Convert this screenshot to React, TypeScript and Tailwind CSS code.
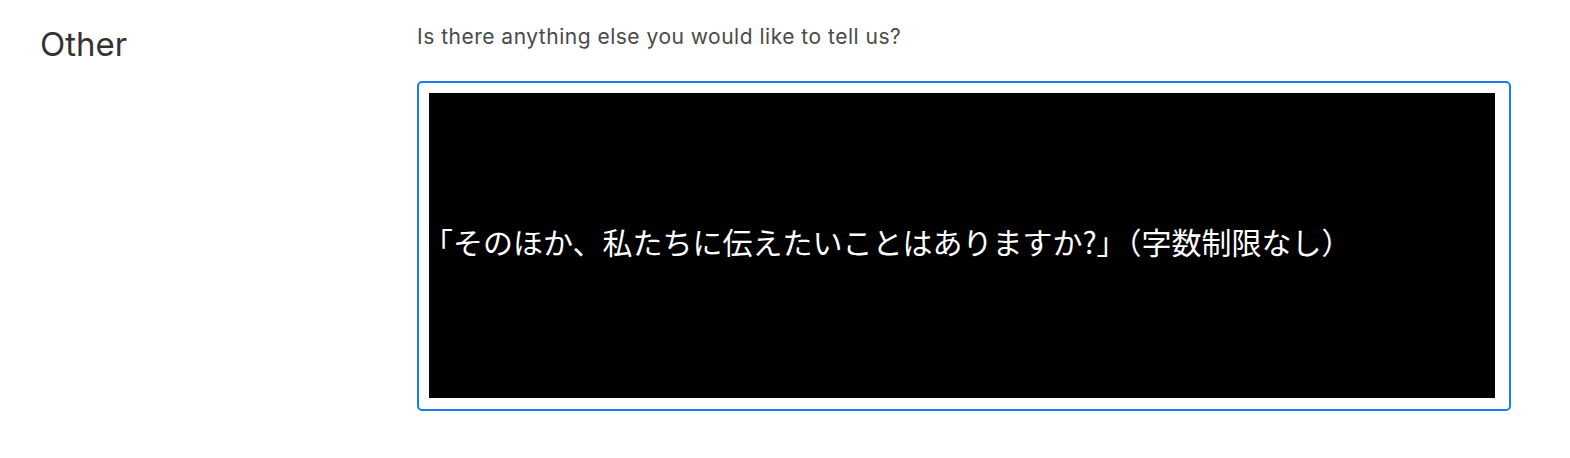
export default function App() {
  return (
    <div className="w-[1570px] h-[458px] bg-white flex" style={{ fontFamily: 'Inter, "Noto Sans", "Liberation Sans", sans-serif' }}>
      <div className="w-[417px] shrink-0 pl-10 pt-[23px]">
        <div className="text-[33px] leading-[42px] text-[#333333] font-normal">Other</div>
      </div>
      <div className="w-[1094px] pt-[21px]">
        <div className="text-[21px] leading-[32px] tracking-[0.5px] text-[#4a4a4a]">Is there anything else you would like to tell us?</div>
        <div className="mt-[28px] h-[330px] rounded-[5px] border-2 border-[#1a7cf0] pl-[10px] pt-[10px] pr-[14px] pb-[10px]">
          <div className="h-[305px] bg-black flex items-center pb-[10px]">
            <span className="-ml-[6px] text-white text-[30px] leading-none whitespace-nowrap" style={{ fontFamily: '"Noto Sans CJK JP", sans-serif' }}>
              「そのほか、私たちに伝えたいことはありますか?」（字数制限なし）
            </span>
          </div>
        </div>
      </div>
    </div>
  );
}
